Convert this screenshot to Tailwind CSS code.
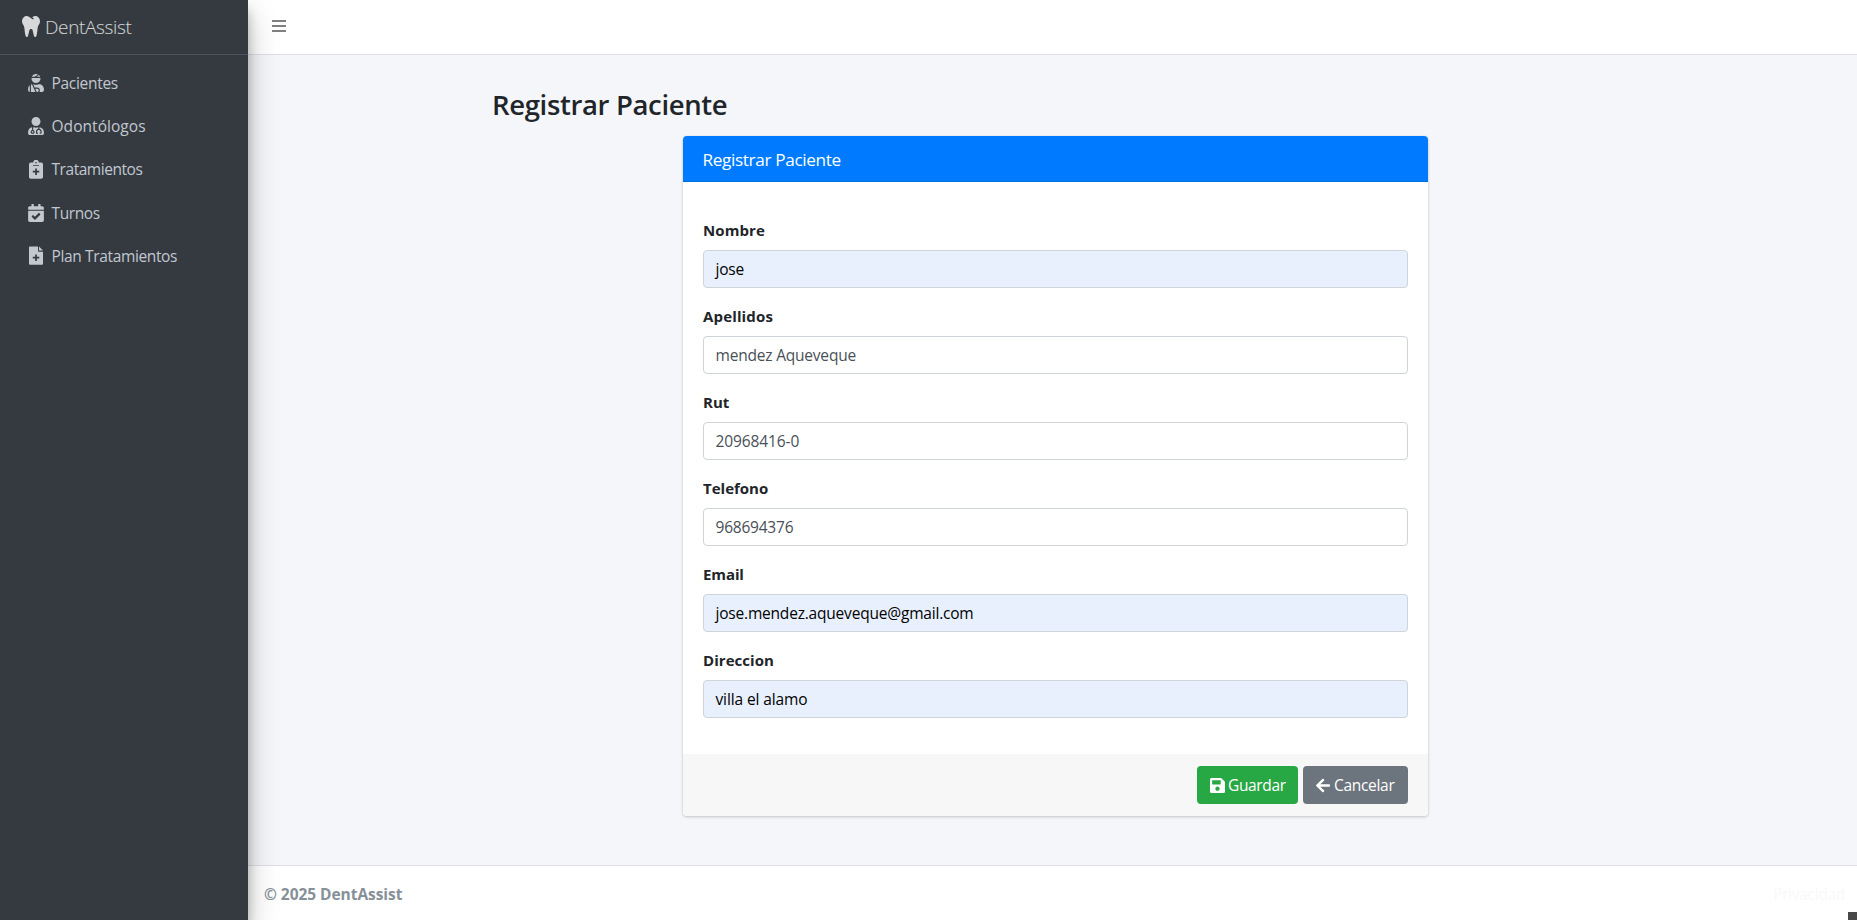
<!DOCTYPE html>
<html lang="es">
<head>
<meta charset="utf-8">
<title>Registrar Paciente - DentAssist</title>
<script src="https://cdn.jsdelivr.net/npm/@tailwindcss/browser@4"></script>
</head>
<body class="h-[920px] overflow-hidden bg-[#f4f6f9] font-['Open_Sans',sans-serif] text-[15.5px] leading-6 text-[#212529]">
<div class="relative flex h-full">
  <aside class="z-10 flex w-[248px] shrink-0 flex-col bg-[#343a40] text-[#c2c7d0] shadow-[0_14px_28px_rgba(0,0,0,0.25),0_10px_10px_rgba(0,0,0,0.22)]">
    <a class="flex h-[55px] items-center border-b border-[#4b545c] pb-px pl-[22px] text-white/80">
      <svg class="mr-[5px] h-[21px] w-[18px]" viewBox="0 0 448 512" preserveAspectRatio="none" fill="currentColor"><path d="M443.98 96.25c-11.01-45.22-47.11-82.06-92.01-93.72-32.19-8.36-63 5.1-89.14 24.33-3.25 2.39-6.96 3.73-10.5 5.48l28.32 18.21c7.42 4.77 9.58 14.67 4.8 22.11-4.46 6.95-14.27 9.86-22.11 4.8L162.83 12.84c-20.7-10.85-43.38-16.4-66.81-10.31-44.9 11.67-81 48.5-92.01 93.72-10.13 41.62-.42 80.81 21.5 110.43 23.36 31.57 32.68 68.66 36.29 107.35 4.4 47.16 10.33 94.16 20.94 140.32l7.8 33.95c3.19 13.87 15.49 23.7 29.67 23.7 13.97 0 26.15-9.55 29.54-23.16l34.47-138.42c4.56-18.32 20.96-31.16 39.76-31.16s35.2 12.85 39.76 31.16l34.47 138.42c3.39 13.61 15.57 23.16 29.54 23.16 14.18 0 26.48-9.83 29.67-23.7l7.8-33.95c10.61-46.15 16.53-93.16 20.94-140.32 3.61-38.7 12.93-75.78 36.29-107.35 21.95-29.61 31.66-68.8 21.53-110.43z"/></svg>
      <span class="text-[19px] font-light tracking-[-0.35px]">DentAssist</span>
    </a>
    <nav class="flex flex-col gap-[3.2px] pt-2 pl-7">
      <a class="flex h-10 items-center gap-[7.5px]">
        <svg class="h-[18px] w-4" viewBox="0 0 448 512" fill="currentColor"><path d="M277.37 11.98C261.08 4.47 243.11 0 224 0c-53.69 0-99.5 33.13-118.51 80h81.19l90.69-68.02zM342.51 80c-7.9-19.47-20.67-36.2-36.49-49.52L239.99 80h102.52zM224 256c70.69 0 128-57.31 128-128 0-5.48-.95-10.7-1.61-16H97.61c-.67 5.3-1.61 10.52-1.61 16 0 70.69 57.31 128 128 128zM80 299.7V512h128.26l-98.45-221.52A132.835 132.835 0 0 0 80 299.7zM0 464c0 26.51 21.49 48 48 48V320.24C18.88 344.89 0 381.26 0 422.4V464zm256-48h-55.38l42.67 96H256c26.47 0 48-21.53 48-48s-21.53-48-48-48zm57.6-128h-16.71c-22.24 10.18-46.88 16-72.89 16s-50.65-5.82-72.89-16h-7.37l42.67 96H256c44.11 0 80 35.89 80 80 0 18.08-6.26 34.59-16.41 48H400c26.51 0 48-21.49 48-48v-41.6c0-74.23-60.17-134.4-134.4-134.4z"/></svg>
        <span class="tracking-[-0.3px]">Pacientes</span>
      </a>
      <a class="flex h-10 items-center gap-[7.5px]">
        <svg class="h-[18px] w-4" viewBox="0 0 448 512" fill="currentColor"><path d="M224 256c70.7 0 128-57.3 128-128S294.7 0 224 0 96 57.3 96 128s57.3 128 128 128zM104 424c0 13.3 10.7 24 24 24s24-10.7 24-24-10.7-24-24-24-24 10.7-24 24zm216-135.4v49c36.5 7.4 64 39.8 64 78.4v41.7c0 7.6-5.4 14.2-12.9 15.7l-32.2 6.4c-4.3.9-8.5-1.9-9.4-6.3l-3.1-15.7c-.9-4.3 1.9-8.600 6.300-9.400l19.300-3.900V416c0-62.800-96-65.100-96 1.900v26.700l19.300 3.900c4.300.9 7.100 5.100 6.300 9.400l-3.100 15.700c-.9 4.300-5.100 7.100-9.400 6.300l-31.200-4.200c-7.900-1.100-13.800-7.800-13.800-15.900V416c0-38.600 27.500-70.900 64-78.400v-45.200c-2.200.7-4.400 1.100-6.600 1.900-18 6.300-37.300 9.800-57.400 9.800s-39.400-3.500-57.400-9.800c-7.400-2.600-14.900-4.200-22.600-5.200v81.600c23.100 6.900 40 28.100 40 53.400 0 30.900-25.100 56-56 56s-56-25.100-56-56c0-25.300 16.900-46.500 40-53.400v-80.400C48.500 301 0 355.800 0 422.400v44.800C0 491.900 20.100 512 44.800 512h358.400c24.700 0 44.800-20.100 44.800-44.800v-44.800c0-72-56.800-130.300-128-133.800z"/></svg>
        <span class="tracking-[0.05px]">Odontólogos</span>
      </a>
      <a class="flex h-10 items-center gap-[7.5px]">
        <svg class="h-[19px] w-4" viewBox="0 0 16 19" fill="currentColor"><path fill-rule="evenodd" d="M2.700 2.600h2.500a2.800 2.800 0 0 1 5.600 0h2.500A1.700 1.700 0 0 1 15 4.300v12.700a1.700 1.700 0 0 1-1.700 1.700H2.700A1.700 1.700 0 0 1 1 17V4.300a1.700 1.700 0 0 1 1.700-1.700zM8 1.900a.8.800 0 1 0 0 1.600.8.800 0 0 0 0-1.600zM5 5v.700h6V5zM7.200 8.500v2.300H4.800v1.700h2.400v2.400h1.700v-2.400h2.400v-1.700H8.900V8.500z"/></svg>
        <span class="tracking-[-0.45px]">Tratamientos</span>
      </a>
      <a class="flex h-10 items-center gap-[7.5px]">
        <svg class="h-[18px] w-4" viewBox="0 0 448 512" fill="currentColor"><path d="M436 160H12c-6.627 0-12-5.373-12-12v-36c0-26.510 21.490-48 48-48h48V12c0-6.627 5.373-12 12-12h40c6.627 0 12 5.373 12 12v52h128V12c0-6.627 5.373-12 12-12h40c6.627 0 12 5.373 12 12v52h48c26.510 0 48 21.490 48 48v36c0 6.627-5.373 12-12 12zM12 192h424c6.627 0 12 5.373 12 12v260c0 26.510-21.490 48-48 48H48c-26.510 0-48-21.490-48-48V204c0-6.627 5.373-12 12-12zm333.296 95.947l-28.169-28.398c-4.667-4.705-12.265-4.736-16.970-.068L194.120 364.665l-45.980-46.352c-4.667-4.705-12.266-4.736-16.971-.068l-28.397 28.170c-4.705 4.667-4.736 12.265-.068 16.970l82.601 83.269c4.667 4.705 12.265 4.736 16.970.068l142.953-141.805c4.705-4.667 4.736-12.265.068-16.970z"/></svg>
        <span class="tracking-[-0.4px]">Turnos</span>
      </a>
      <a class="flex h-10 items-center gap-[7.5px]">
        <svg class="h-[19px] w-4" viewBox="0 0 16 19" fill="currentColor"><path fill-rule="evenodd" d="M1.900.4H10v4.300a1 1 0 0 0 1 1h4v12.100a.9.900 0 0 1-.9.900H1.900a.9.900 0 0 1-.9-.9V1.300A.9.900 0 0 1 1.900.4zM7.200 8.500v2.300H4.800v1.700h2.400v2.400h1.700v-2.400h2.400v-1.700H8.900V8.500zM11 .4L15 4.600h-4z"/></svg>
        <span class="tracking-[-0.36px]">Plan Tratamientos</span>
      </a>
    </nav>
  </aside>

  <div class="flex min-w-0 flex-1 flex-col">
    <header class="flex h-[55px] items-center border-b border-[#dee2e6] bg-white pl-6">
      <svg class="mb-[2px] h-3 w-[14px]" viewBox="0 0 14 12" fill="#808080"><path d="M0 0h14v2H0zM0 5h14v2H0zM0 10h14v2H0z"/></svg>
    </header>

    <main class="flex flex-1 flex-col pl-[244px]">
      <h2 class="mt-[33px] h-[34px] text-[27.5px] leading-[34px] font-semibold tracking-[-0.35px]">Registrar Paciente</h2>
      <section class="mt-[14px] ml-[191px] w-[745px] overflow-hidden rounded bg-white shadow-[0_0_1px_rgba(0,0,0,0.125),0_1px_3px_rgba(0,0,0,0.2)]">
        <div class="flex h-[46px] items-center border-b border-[#0070e0] bg-[#007bff] px-[19.5px] pt-0.5 text-white">
          <h3 class="text-[17.2px] tracking-[-0.36px]">Registrar Paciente</h3>
        </div>
        <form class="flex flex-col gap-4 px-5 pt-9 pb-9">
          <div class="flex flex-col gap-2"><label class="h-6 text-[15px] font-bold tracking-[0.1px]">Nombre</label><div class="flex h-[38px] items-center rounded border border-[#ced4da] bg-[#e8f0fe] px-[11.5px] text-black"><span class="tracking-[-0.2px]">jose</span></div></div>
          <div class="flex flex-col gap-2"><label class="h-6 text-[15px] font-bold tracking-[0.15px]">Apellidos</label><div class="flex h-[38px] items-center rounded border border-[#ced4da] bg-white px-[11.5px] text-[#495057]"><span class="tracking-[-0.2px]">mendez Aqueveque</span></div></div>
          <div class="flex flex-col gap-2"><label class="h-6 text-[15px] font-bold">Rut</label><div class="flex h-[38px] items-center rounded border border-[#ced4da] bg-white px-[11.5px] text-[#495057]"><span class="tracking-[-0.1px]">20968416-0</span></div></div>
          <div class="flex flex-col gap-2"><label class="h-6 text-[15px] font-bold">Telefono</label><div class="flex h-[38px] items-center rounded border border-[#ced4da] bg-white px-[11.5px] text-[#495057]"><span class="tracking-[-0.22px]">968694376</span></div></div>
          <div class="flex flex-col gap-2"><label class="h-6 text-[15px] font-bold tracking-[-0.1px]">Email</label><div class="flex h-[38px] items-center rounded border border-[#ced4da] bg-[#e8f0fe] px-[11.5px] text-black"><span class="tracking-[-0.2px]">jose.mendez.aqueveque@gmail.com</span></div></div>
          <div class="flex flex-col gap-2"><label class="h-6 text-[15px] font-bold tracking-[0.05px]">Direccion</label><div class="flex h-[38px] items-center rounded border border-[#ced4da] bg-[#e8f0fe] px-[11.5px] text-black"><span class="tracking-[-0.12px]">villa el alamo</span></div></div>
        </form>
        <div class="flex h-[62px] items-center justify-end gap-[5px] bg-[#f7f7f7] px-5 text-white">
          <button class="flex h-[38px] w-[101px] items-center gap-[3px] rounded bg-[#28a745] pl-[13px]">
            <svg class="size-[15px]" viewBox="0 0 448 448" fill="currentColor"><path d="M433.941 97.941l-83.882-83.882A48 48 0 0 0 316.118 0H48C21.490 0 0 21.490 0 48v352c0 26.510 21.490 48 48 48h352c26.510 0 48-21.490 48-48V131.882a48 48 0 0 0-14.059-33.941zM224 384c-35.346 0-64-28.654-64-64s28.654-64 64-64 64 28.654 64 64-28.654 64-64 64zm96-304.520V180c0 6.627-5.373 12-12 12H76c-6.627 0-12-5.373-12-12V76c0-6.627 5.373-12 12-12h228.520c3.183 0 6.235 1.264 8.485 3.515l3.480 3.480A11.996 11.996 0 0 1 320 79.480z"/></svg>
            <span class="tracking-[-0.36px]">Guardar</span>
          </button>
          <button class="flex h-[38px] w-[105px] items-center gap-1 rounded bg-[#6c757d] pl-[13px]">
            <svg class="h-[15px] w-[14px]" viewBox="0 32 448 448" fill="currentColor"><path d="M257.500 445.100l-22.200 22.200c-9.400 9.400-24.600 9.400-33.900 0L7 273c-9.400-9.400-9.400-24.600 0-33.900L201.400 44.700c9.400-9.400 24.600-9.400 33.900 0l22.200 22.200c9.500 9.500 9.300 25-.4 34.300L136.600 216H424c13.300 0 24 10.700 24 24v32c0 13.300-10.700 24-24 24H136.600l120.500 114.800c9.800 9.300 10 24.800.4 34.300z"/></svg>
            <span class="tracking-[-0.3px]">Cancelar</span>
          </button>
        </div>
      </section>
    </main>

    <footer class="flex h-[55px] items-center justify-between border-t border-[#dee2e6] bg-white pt-px pr-3 pl-4">
      <strong class="text-[15.5px] font-bold tracking-[-0.05px] text-[#869099]">© 2025 DentAssist</strong>
      <a class="tracking-[-0.3px] text-[#f8f9fa]">Privacidad</a>
    </footer>
  </div>
  <div class="absolute right-0 bottom-0 h-2 w-[9px] bg-[#484848]"></div>
</div>
</body>
</html>
